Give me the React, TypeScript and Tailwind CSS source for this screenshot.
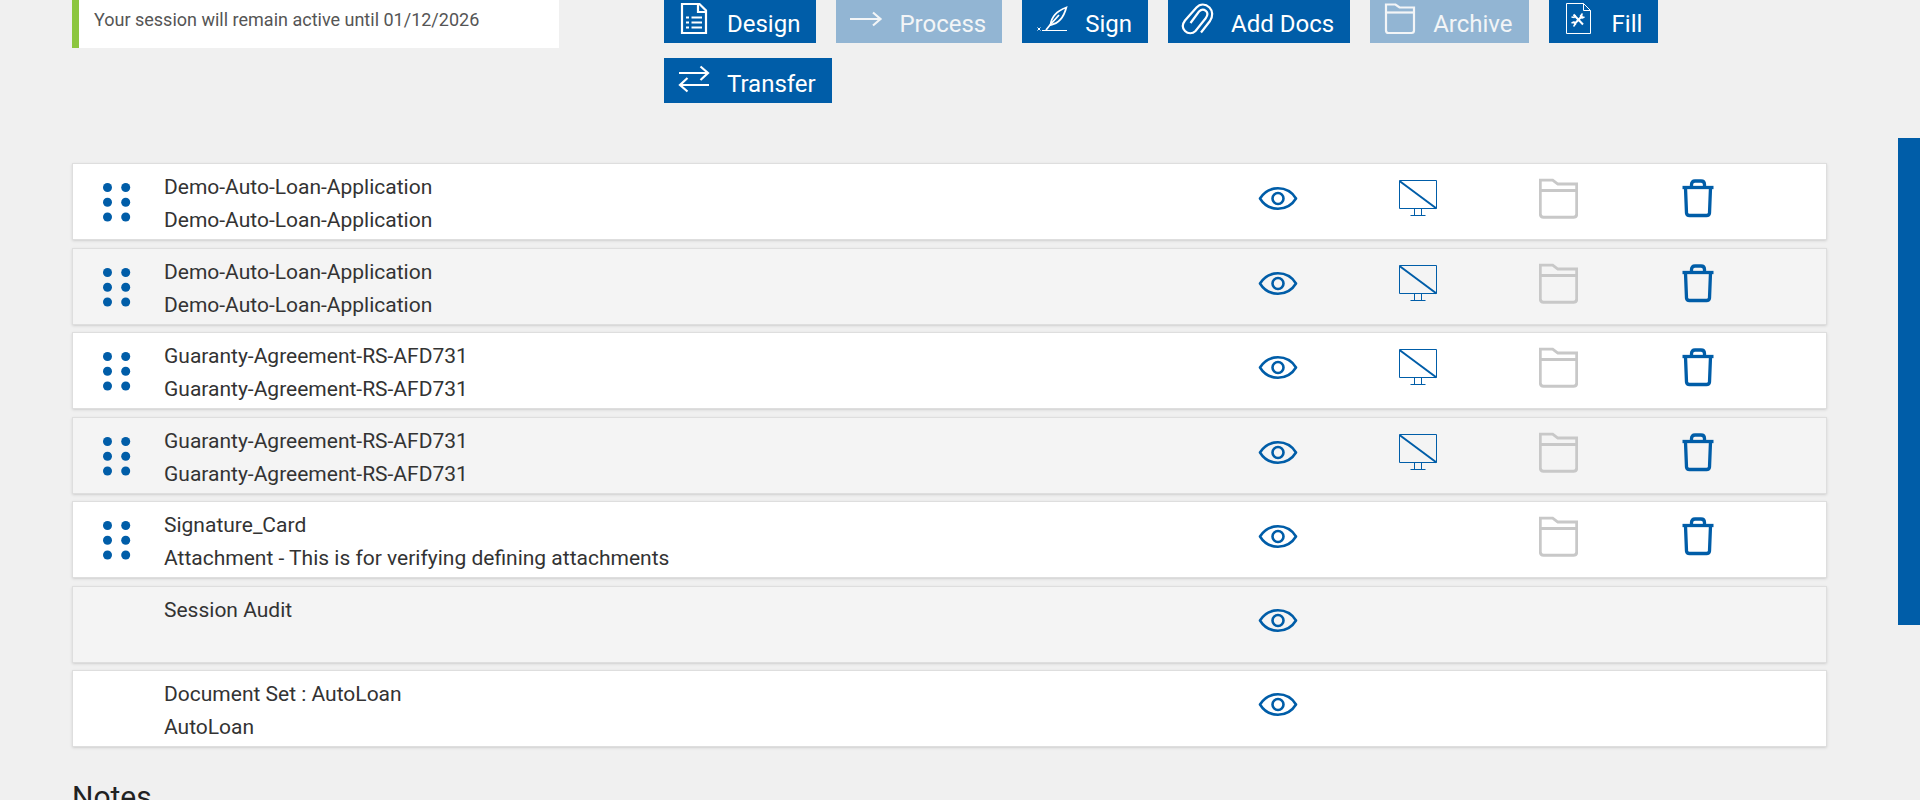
import type { ReactNode } from 'react'

type ActionButton = { label: string; icon: ReactNode; disabled?: boolean }

type DocumentRow = {
  id: number
  title: string
  subtitle?: string
  draggable?: boolean
  screen?: boolean
  archive?: boolean
}

const rows: DocumentRow[] = [
  { id: 1, title: 'Demo-Auto-Loan-Application', subtitle: 'Demo-Auto-Loan-Application', draggable: true, screen: true, archive: true },
  { id: 2, title: 'Demo-Auto-Loan-Application', subtitle: 'Demo-Auto-Loan-Application', draggable: true, screen: true, archive: true },
  { id: 3, title: 'Guaranty-Agreement-RS-AFD731', subtitle: 'Guaranty-Agreement-RS-AFD731', draggable: true, screen: true, archive: true },
  { id: 4, title: 'Guaranty-Agreement-RS-AFD731', subtitle: 'Guaranty-Agreement-RS-AFD731', draggable: true, screen: true, archive: true },
  { id: 5, title: 'Signature_Card', subtitle: 'Attachment - This is for verifying defining attachments', draggable: true, archive: true },
  { id: 6, title: 'Session Audit' },
  { id: 7, title: 'Document Set : AutoLoan', subtitle: 'AutoLoan' },
]

function ToolIcon({ children, width = 2.2 }: { children: ReactNode; width?: number }) {
  return (
    <svg viewBox="0 0 30 32" className="w-[30px] h-8 shrink-0 overflow-visible" fill="none" stroke="currentColor" strokeWidth={width} aria-hidden="true">
      {children}
    </svg>
  )
}

function FolderShape() {
  return (
    <>
      <path d="M1 1.5H10.5L14.5 4.5H29V27.5Q29 30 26.5 30H3.5Q1 30 1 27.5Z" />
      <path d="M1 9.5H29" />
    </>
  )
}

const buttons: ActionButton[] = [
  {
    label: 'Design',
    icon: (
      <ToolIcon>
        <path d="M3 1H20.5L27 7.5V30H3Z" />
        <path d="M19 1V9H27" />
        <path d="M7 14.5H10M7 19.5H10M7 24.5H10M12.5 14.5H23M12.5 19.5H23M12.5 24.5H23" />
      </ToolIcon>
    ),
  },
  {
    label: 'Process',
    disabled: true,
    icon: (
      <ToolIcon>
        <path d="M-1 16H29M22 9.5L29.5 16L22 22.5" />
      </ToolIcon>
    ),
  },
  {
    label: 'Sign',
    icon: (
      <ToolIcon width={1.8}>
        <path d="M29.3 4.5C21 7.500 14.500 12.500 13.500 22C21.500 20.500 27 13.500 29.300 4.500Z" />
        <path d="M9 27L13 22L22 12" />
        <path d="M5 27.5H30" strokeWidth="1" />
        <path d="M0.5 24.5L3.5 27.5M3.5 24.5L0.5 27.5" strokeWidth="1" />
      </ToolIcon>
    ),
  },
  {
    label: 'Add Docs',
    icon: (
      <ToolIcon>
        <path d="M18 29.5L27 18C30 13.5 30 8 26.5 4.5C22.5 0.5 17 0.5 13.5 4.5L2 17.5C-1 21.5 -0.5 25.5 2 28C5 31 9.5 31 12.5 28L22.5 15.5C25 12 25 9.5 22.8 7.8C20.5 6 18 6.5 16 8.5L7.5 20" />
      </ToolIcon>
    ),
  },
  { label: 'Archive', disabled: true, icon: <ToolIcon><FolderShape /></ToolIcon> },
  {
    label: 'Fill',
    icon: (
      <ToolIcon width={1}>
        <path d="M2.5 0.5H19.5L26.5 7.5V30.5H2.5Z" />
        <path d="M19.5 0.5V7.5H26.5" />
        <path d="M9.5 11.5L19 21.5M18.5 12.5L10 21.5" strokeWidth="2" />
        <path d="M18.5 10.5L16.500 13L18 15L20.500 14M9.500 23.500L11.500 21L10 19L7.500 20M7.500 14L10 14.500L11.500 12" strokeWidth="1.5" />
      </ToolIcon>
    ),
  },
  {
    label: 'Transfer',
    icon: (
      <ToolIcon>
        <path d="M0 10H29M21.5 3.5L29 10L21.5 17" />
        <path d="M30 22H1M8.5 15L1 22L8.5 28.5" />
      </ToolIcon>
    ),
  },
]

function EyeIcon() {
  return (
    <svg viewBox="0 0 40 40" className="size-10" fill="none" stroke="currentColor" strokeWidth="2.6" aria-hidden="true">
      <path d="M2 19.5C6 13 12.5 9.3 20 9.3S34 13 38 19.5C34 26 27.5 29.7 20 29.7S6 26 2 19.5Z" strokeLinejoin="round" />
      <circle cx="20" cy="19.5" r="5.500" />
    </svg>
  )
}

function ScreenIcon() {
  return (
    <svg viewBox="0 0 40 40" className="size-10" fill="none" stroke="currentColor" aria-hidden="true">
      <path d="M1.5 1.5H38.5V29.5H1.5Z" />
      <path d="M1.5 2L38.5 29.5" strokeWidth="2" />
      <path d="M16.5 29.5V36.5M23.5 29.5V36.5M12.5 36.5H27.5" />
    </svg>
  )
}

function TrashIcon() {
  return (
    <svg viewBox="0 0 40 40" className="size-10" fill="none" stroke="currentColor" strokeWidth="3.3" aria-hidden="true">
      <path d="M4.500 8.500H35.500" />
      <path d="M13.5 8V5.5Q13.5 2 17 2H23Q26.5 2 26.5 5.5V8" />
      <path d="M7.500 9L8.500 34Q8.800 36.500 11.500 36.500H28.500Q31.200 36.500 31.500 34L32.500 9" />
    </svg>
  )
}

function DragHandle() {
  return (
    <button type="button" aria-label="Reorder" className="mt-[19px] text-[#005da8]">
      <svg viewBox="0 0 28 40" className="w-7 h-10" fill="currentColor" aria-hidden="true">
        {[4.5, 19.2, 34].map(y => (
          <g key={y}>
            <circle cx="4.500" cy={y} r="4.500" />
            <circle cx="22.700" cy={y} r="4.500" />
          </g>
        ))}
      </svg>
    </button>
  )
}

function Row({ row }: { row: DocumentRow }) {
  return (
    <li className="flex h-[77px] border border-[#dedede] bg-white shadow-sm odd:mb-2 even:mb-[7px] even:bg-[#f4f4f4]">
      <div className="w-[91px] shrink-0 pl-[30px]">{row.draggable && <DragHandle />}</div>
      <div className="flex-1 pt-[7px] text-[21px] leading-[33px] text-[#333]">
        <div>{row.title}</div>
        <div>{row.subtitle}</div>
      </div>
      <div className="mt-[14px] mr-[58px] grid h-10 w-[560px] grid-cols-4 place-items-center text-[#005da8]">
        <button type="button" aria-label="View"><EyeIcon /></button>
        {row.screen ? <button type="button" aria-label="Hide from screen"><ScreenIcon /></button> : <span />}
        {row.archive && (
          <>
            <button type="button" aria-label="Archive" disabled className="text-[#c8c8c8]">
              <svg viewBox="0 0 30 32" className="w-[39px] h-[42px]" fill="none" stroke="currentColor" strokeWidth="2.2" aria-hidden="true">
                <FolderShape />
              </svg>
            </button>
            <button type="button" aria-label="Delete"><TrashIcon /></button>
          </>
        )}
      </div>
    </li>
  )
}

export default function App() {
  return (
    <div className="relative h-screen overflow-hidden bg-[#f0f0f0] pl-[72px] pr-[93px] font-['Roboto',sans-serif]">
      <div className="flex items-start">
        <div className="w-[487px] shrink-0 border-l-[7px] border-[#8cc63f] bg-white pb-[15px] pl-[15px] pt-[6px] text-lg leading-[27px] text-[#555]">
          Your session will remain active until 01/12/2026
        </div>
        <div className="-mt-[2px] ml-[105px] flex max-w-[1060px] flex-wrap gap-x-5 gap-y-[15px]">
          {buttons.map(b => (
            <button
              key={b.label}
              type="button"
              disabled={b.disabled}
              className="flex h-[45px] items-start gap-[18px] bg-[#005da8] pl-[15px] pr-4 pt-[5px] text-2xl text-white disabled:bg-[#92b5d3] disabled:text-[#f3f5f7]"
            >
              {b.icon}
              <span className="pt-[5px] leading-8">{b.label}</span>
            </button>
          ))}
        </div>
      </div>

      <ul className="mt-[60px]">
        {rows.map(row => <Row key={row.id} row={row} />)}
      </ul>

      <h2 className="mt-8 text-3xl leading-9 text-[#222]">Notes</h2>

      {/* Side panel tab */}
      <div className="absolute right-0 top-[138px] h-[487px] w-[22px] bg-[#005da8]" />
    </div>
  )
}
